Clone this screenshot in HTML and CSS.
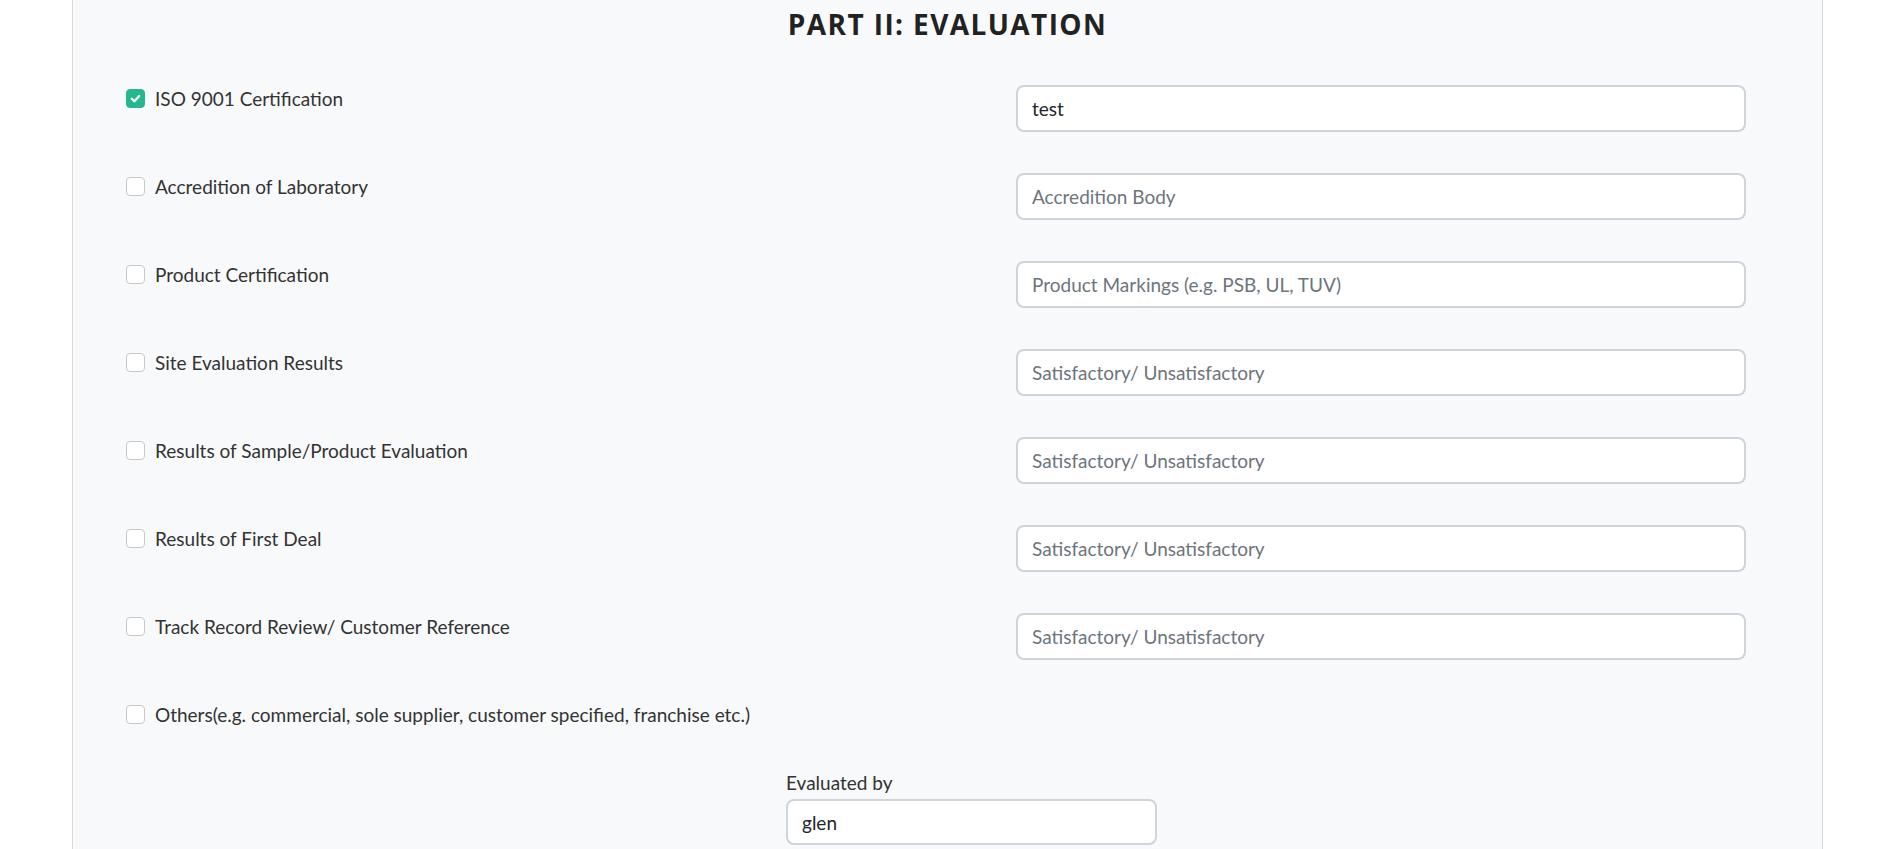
FILE: index.html
```html
<!DOCTYPE html>
<html lang="en">
<head>
<meta charset="utf-8">
<title>Part II: Evaluation</title>
<link rel="stylesheet" href="styles.css">
</head>
<body>
<div class="card">
  <h2 class="title">PART II: EVALUATION</h2>
  <div class="rows">
    <div class="row">
      <label class="check"><span class="box checked"><svg viewBox="0 0 14 14" width="13" height="13"><path d="M3 7.3 L5.9 10 L11 4.4" fill="none" stroke="#fff" stroke-width="2.4" stroke-linecap="round" stroke-linejoin="round"/></svg></span>ISO 9001 Certification</label>
      <input class="field" type="text" value="test">
    </div>
    <div class="row">
      <label class="check"><span class="box"></span>Accredition of Laboratory</label>
      <input class="field" type="text" placeholder="Accredition Body">
    </div>
    <div class="row">
      <label class="check"><span class="box"></span>Product Certification</label>
      <input class="field" type="text" placeholder="Product Markings (e.g. PSB, UL, TUV)">
    </div>
    <div class="row">
      <label class="check"><span class="box"></span>Site Evaluation Results</label>
      <input class="field" type="text" placeholder="Satisfactory/ Unsatisfactory">
    </div>
    <div class="row">
      <label class="check"><span class="box"></span>Results of Sample/Product Evaluation</label>
      <input class="field" type="text" placeholder="Satisfactory/ Unsatisfactory">
    </div>
    <div class="row">
      <label class="check"><span class="box"></span>Results of First Deal</label>
      <input class="field" type="text" placeholder="Satisfactory/ Unsatisfactory">
    </div>
    <div class="row">
      <label class="check"><span class="box"></span>Track Record Review/ Customer Reference</label>
      <input class="field" type="text" placeholder="Satisfactory/ Unsatisfactory">
    </div>
    <div class="row">
      <label class="check"><span class="box"></span>Others(e.g. commercial, sole supplier, customer specified, franchise etc.)</label>
    </div>
  </div>
  <div class="evaluated">
    <div class="ev-label">Evaluated by</div>
    <input class="field ev-field" type="text" value="glen">
  </div>
</div>
</body>
</html>
```

FILE: styles.css
```css
html, body {
  margin: 0;
  padding: 0;
  background: #ffffff;
}
body {
  font-family: Lato, "Open Sans", sans-serif;
  color: #333333;
  overflow: hidden;
}
.card {
  margin-left: 72px;
  width: 1751px;
  min-height: 849px;
  box-sizing: border-box;
  border-left: 1px solid #d9d9d9;
  border-right: 1px solid #d9d9d9;
  background: #f8f9fa;
}
.title {
  margin: 0;
  padding-top: 7px;
  font-family: "Open Sans", sans-serif;
  font-weight: 700;
  font-size: 28px;
  line-height: 34px;
  letter-spacing: 1.4px;
  color: #222222;
  text-align: center;
}
.rows {
  margin-top: 44px;
  padding-left: 53px;
  display: flex;
  flex-direction: column;
  gap: 41px;
}
.row {
  display: grid;
  grid-template-columns: 890px 730px;
  align-items: start;
  min-height: 47px;
}
.check {
  display: flex;
  align-items: center;
  gap: 10px;
  font-size: 19px;
  line-height: 27px;
  color: #333333;
}
.box {
  width: 19px;
  height: 19px;
  box-sizing: border-box;
  border: 1px solid #c8c8c8;
  border-radius: 4px;
  background: #ffffff;
  display: flex;
  align-items: center;
  justify-content: center;
  flex: none;
}
.box.checked {
  background: #25b88f;
  border-color: #25b88f;
}
.field {
  height: 47px;
  width: 730px;
  box-sizing: border-box;
  border: 2px solid #ced4da;
  border-radius: 8px;
  background: #ffffff;
  padding: 0 14px;
  font-family: Lato, sans-serif;
  font-size: 19px;
  color: #212529;
  outline: none;
}
.field::placeholder {
  color: #6c757d;
}
.evaluated {
  margin-top: 21px;
  margin-left: 713px;
  width: 371px;
}
.ev-label {
  font-size: 19px;
  line-height: 27px;
  color: #333333;
  margin-bottom: 3px;
}
.ev-field {
  width: 371px;
  height: 46px;
}
```
